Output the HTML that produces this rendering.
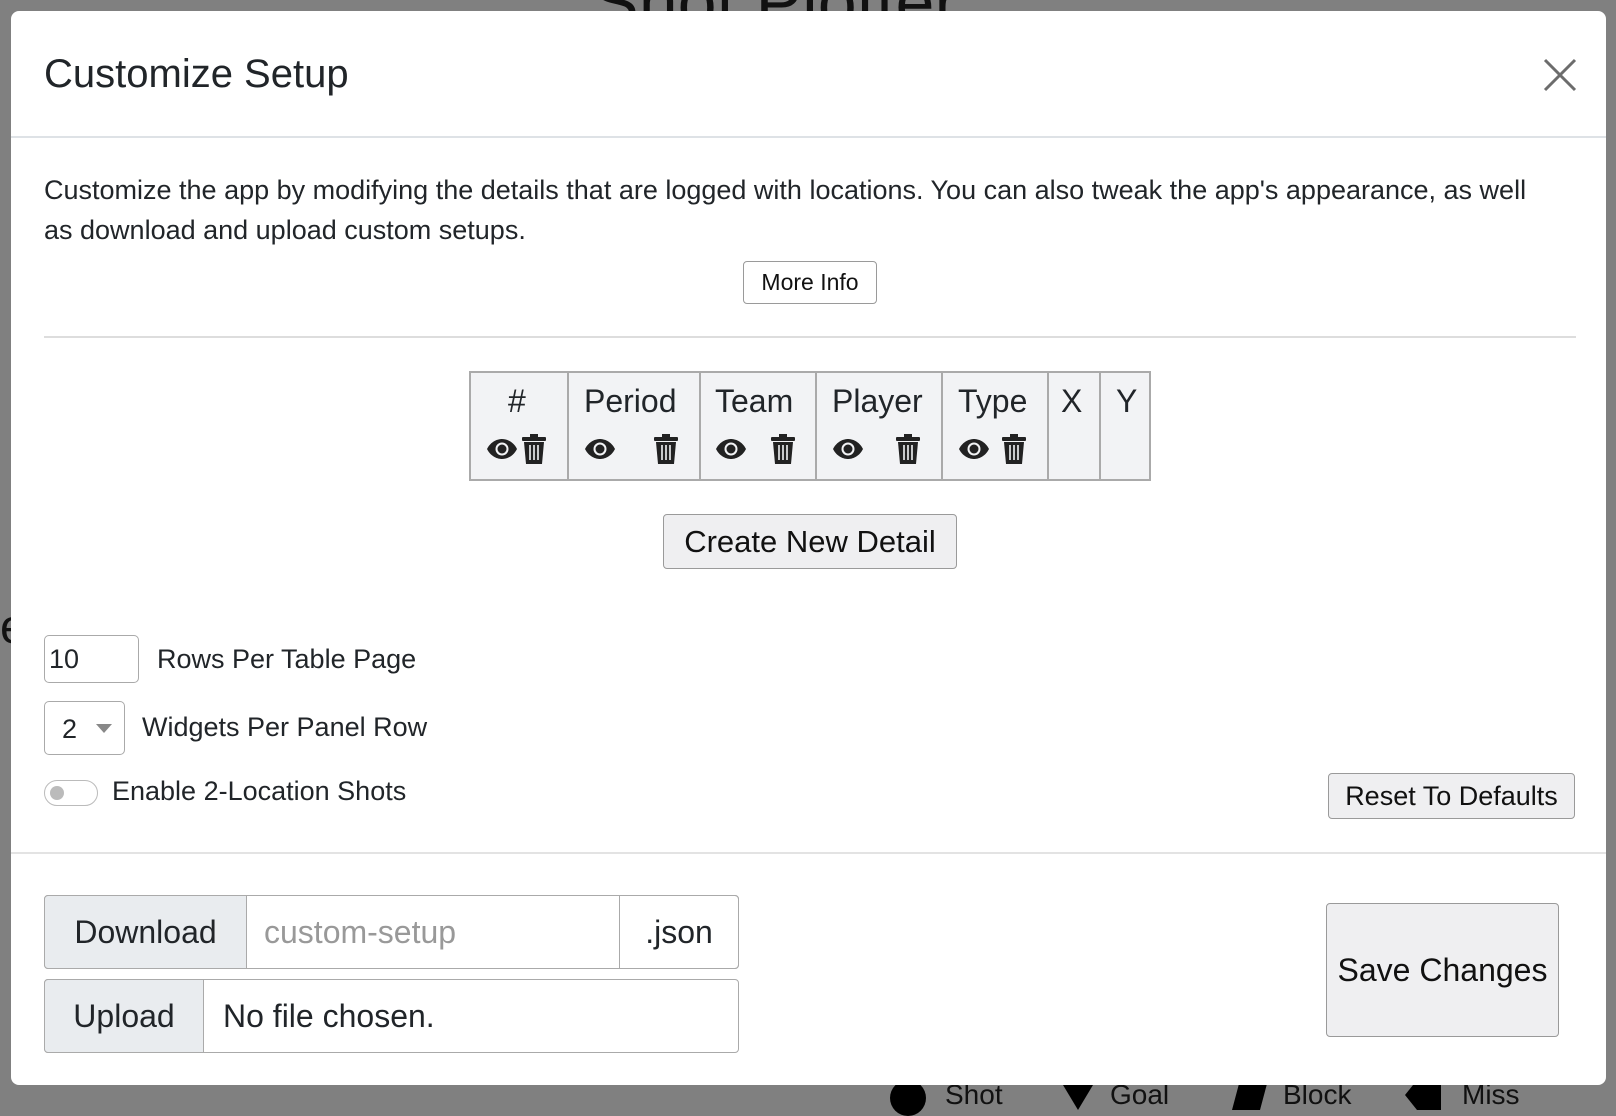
<!DOCTYPE html>
<html><head><meta charset="utf-8"><style>
*{box-sizing:border-box;margin:0;padding:0}
body{width:1616px;height:1102px;overflow:hidden;background:#808080;font-family:"Liberation Sans",sans-serif;color:#212529;position:relative}
.abs{position:absolute}
.modal{left:11px;top:11px;width:1595px;height:1074px;background:#fff;border-radius:8px}
.btn{position:absolute;border:1.5px solid #9a9a9a;border-radius:4px;background:#efeff1;display:flex;align-items:center;justify-content:center;color:#111}
</style></head><body>
<div class="abs" style="left:592px;top:-38px;font-size:70px;color:#111">Shot Plotter</div>
<div class="abs" style="left:0;top:600px;font-size:48px;color:#111">e</div>
<div class="abs" style="left:890px;top:1080px;width:36px;height:36px;border-radius:50%;background:#000"></div>
<svg class="abs" style="left:1060px;top:1080px" width="36" height="30"><path d="M0 0H36L18 30Z" fill="#000"/></svg>
<svg class="abs" style="left:1232px;top:1080px" width="36" height="30"><path d="M8 0H36L28 30H0Z" fill="#000"/></svg>
<svg class="abs" style="left:1405px;top:1080px" width="36" height="30"><path d="M12 0H36V30H12L0 15Z" fill="#000"/></svg>
<div class="abs" style="left:945px;top:1079px;font-size:28px;color:#111">Shot</div>
<div class="abs" style="left:1110px;top:1079px;font-size:28px;color:#111">Goal</div>
<div class="abs" style="left:1283px;top:1079px;font-size:28px;color:#111">Block</div>
<div class="abs" style="left:1462px;top:1079px;font-size:28px;color:#111">Miss</div>
<div class="abs modal"></div>
<div class="abs" style="left:44px;top:52px;font-size:40px">Customize Setup</div>
<svg class="abs" style="left:1543px;top:58px" width="34" height="34"><path d="M2 2L32 32M32 2L2 32" stroke="#6c6c6c" stroke-width="3"/></svg>
<div class="abs" style="left:11px;top:136px;width:1595px;height:2px;background:#dee2e6"></div>
<div class="abs" style="left:44px;top:170px;width:1510px;font-size:27px;line-height:40px">Customize the app by modifying the details that are logged with locations. You can also tweak the app's appearance, as well as download and upload custom setups.</div>
<div class="btn" style="left:743px;top:261px;width:134px;height:43px;background:#fff;font-size:23px">More Info</div>
<div class="abs" style="left:44px;top:336px;width:1532px;height:2px;background:#ddd"></div>
<div class="abs" style="left:469px;top:371px;width:682px;height:110px;background:#f2f3f5;border:2px solid #aaa"></div>
<div class="abs" style="left:567px;top:371px;width:2px;height:110px;background:#aaa"></div>
<div class="abs" style="left:699px;top:371px;width:2px;height:110px;background:#aaa"></div>
<div class="abs" style="left:815px;top:371px;width:2px;height:110px;background:#aaa"></div>
<div class="abs" style="left:941px;top:371px;width:2px;height:110px;background:#aaa"></div>
<div class="abs" style="left:1047px;top:371px;width:2px;height:110px;background:#aaa"></div>
<div class="abs" style="left:1099px;top:371px;width:2px;height:110px;background:#aaa"></div>
<div class="abs" style="left:470px;top:383px;width:1830px;font-size:32px">
<span class="abs" style="left:38px">#</span><span class="abs" style="left:114px">Period</span><span class="abs" style="left:245px">Team</span><span class="abs" style="left:362px">Player</span><span class="abs" style="left:488px">Type</span><span class="abs" style="left:591px">X</span><span class="abs" style="left:646px">Y</span>
</div>
<svg width="0" height="0" style="position:absolute"><defs>
<g id="eye"><path d="M1 11C5 3 12 1 16 1S27 3 31 11C27 19 20 21 16 21S5 19 1 11Z" fill="#222"/><circle cx="16" cy="11" r="6.5" fill="#f2f3f5"/><circle cx="16" cy="11" r="4.5" fill="#222"/></g>
<g id="tr"><rect x="0" y="3" width="24" height="4" rx="1" fill="#222"/><rect x="8" y="0" width="8" height="4" fill="#222"/><path d="M2 8H22L20 30H4Z" fill="#222"/><path d="M8 11V26M12 11V26M16 11V26" stroke="#f2f3f5" stroke-width="1.6"/></g>
</defs></svg>
<svg class="abs" style="left:486px;top:438px" width="34" height="24"><use href="#eye"/></svg>
<svg class="abs" style="left:522px;top:434px" width="24" height="31"><use href="#tr"/></svg>
<svg class="abs" style="left:584px;top:438px" width="34" height="24"><use href="#eye"/></svg>
<svg class="abs" style="left:654px;top:434px" width="24" height="31"><use href="#tr"/></svg>
<svg class="abs" style="left:715px;top:438px" width="34" height="24"><use href="#eye"/></svg>
<svg class="abs" style="left:771px;top:434px" width="24" height="31"><use href="#tr"/></svg>
<svg class="abs" style="left:832px;top:438px" width="34" height="24"><use href="#eye"/></svg>
<svg class="abs" style="left:896px;top:434px" width="24" height="31"><use href="#tr"/></svg>
<svg class="abs" style="left:958px;top:438px" width="34" height="24"><use href="#eye"/></svg>
<svg class="abs" style="left:1002px;top:434px" width="24" height="31"><use href="#tr"/></svg>
<div class="btn" style="left:663px;top:514px;width:294px;height:55px;font-size:31px">Create New Detail</div>
<div class="abs" style="left:44px;top:635px;width:95px;height:48px;border:1.5px solid #aaa;border-radius:5px;font-size:27px;padding:8px 4px">10</div>
<div class="abs" style="left:157px;top:644px;font-size:27px">Rows Per Table Page</div>
<div class="abs" style="left:44px;top:701px;width:81px;height:54px;border:1.5px solid #aaa;border-radius:5px;font-size:27px;padding:12px 17px">2</div>
<svg class="abs" style="left:96px;top:724px" width="16" height="10"><path d="M0 0H16L8 9Z" fill="#888"/></svg>
<div class="abs" style="left:142px;top:712px;font-size:27px">Widgets Per Panel Row</div>
<div class="abs" style="left:44px;top:780px;width:54px;height:26px;border:1.5px solid #bbb;border-radius:13px"></div>
<div class="abs" style="left:50px;top:786px;width:14px;height:14px;border-radius:50%;background:#bbb"></div>
<div class="abs" style="left:112px;top:776px;font-size:27px">Enable 2-Location Shots</div>
<div class="btn" style="left:1328px;top:773px;width:247px;height:46px;font-size:27px">Reset To Defaults</div>
<div class="abs" style="left:11px;top:852px;width:1595px;height:2px;background:#e3e3e3"></div>
<div class="abs" style="left:44px;top:895px;width:695px;height:74px;border:1.5px solid #aaa;border-radius:4px"></div>
<div class="abs" style="left:44px;top:895px;width:203px;height:74px;border:1.5px solid #aaa;border-radius:4px 0 0 4px;background:#e9ecef;font-size:32px;display:flex;align-items:center;justify-content:center">Download</div>
<div class="abs" style="left:264px;top:914px;font-size:32px;color:#999">custom-setup</div>
<div class="abs" style="left:619px;top:895px;width:120px;height:74px;border:1.5px solid #aaa;border-radius:0 4px 4px 0;font-size:32px;display:flex;align-items:center;justify-content:center">.json</div>
<div class="abs" style="left:44px;top:979px;width:695px;height:74px;border:1.5px solid #aaa;border-radius:4px"></div>
<div class="abs" style="left:44px;top:979px;width:160px;height:74px;border:1.5px solid #aaa;border-radius:4px 0 0 4px;background:#e9ecef;font-size:32px;display:flex;align-items:center;justify-content:center">Upload</div>
<div class="abs" style="left:223px;top:998px;font-size:32px">No file chosen.</div>
<div class="btn" style="left:1326px;top:903px;width:233px;height:134px;font-size:32px">Save Changes</div>
</body></html>
